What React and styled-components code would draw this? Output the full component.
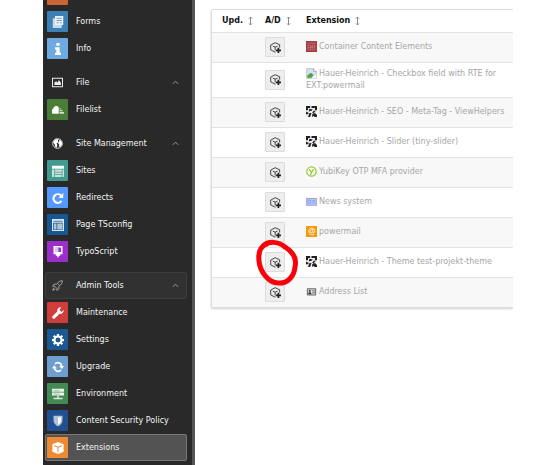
import React from 'react';
import styled, { createGlobalStyle, css } from 'styled-components';

const GlobalStyle = createGlobalStyle`
  * { box-sizing: border-box; }
  body {
    margin: 0;
    background: #fff;
    color: #222;
    font-family: Verdana, "DejaVu Sans", sans-serif;
    font-size: 8px;
    line-height: 12px;
  }
`;

const Layout = styled.div`
  display: grid;
  grid-template-columns: 152px minmax(0, 1fr);
  gap: 16px;
  height: 100vh;
  padding: 0 44px 0 43px;
  overflow: hidden;
`;

const Sidebar = styled.nav`
  background: #292929;
  border-right: 3px solid #555;
  padding: 0 5px 0 2px;
  overflow: hidden;
`;

const Groups = styled.div`
  display: flex;
  flex-direction: column;
  gap: 7px;
  margin-top: -19px;
`;

const entry = css`
  display: grid;
  grid-template-columns: 21px 1fr 12px;
  align-items: center;
  column-gap: 8px;
  width: 100%;
  height: 27px;
  padding: 0 5px 0 1px;
  border: 1px solid ${(p) => (p.$tone === 'active' ? '#777' : p.$tone === 'open' ? '#3d3d3d' : 'transparent')};
  border-radius: 2px;
  background: ${(p) => (p.$tone === 'active' ? '#535353' : p.$tone === 'open' ? '#313131' : 'transparent')};
  color: #f4f4f4;
  font: inherit;
  text-align: left;
  text-decoration: none;
  white-space: nowrap;
`;

const GroupButton = styled.button`${entry}`;
const ModuleLink = styled.a`${entry}`;

const ModuleList = styled.ul`
  list-style: none;
  margin: 0;
  padding: 0;
`;

const Tile = styled.span`
  display: grid;
  place-items: center;
  width: 21px;
  height: 21px;
  border-radius: 1px;
  background: ${(p) => p.$color || 'transparent'};
  color: #fff;
`;

const Glyph = styled.svg`
  display: block;
  justify-self: center;
  width: ${(p) => p.$size || 12}px;
  height: ${(p) => p.$size || 12}px;
  fill: currentColor;
`;

const Main = styled.main`
  padding-top: 9px;
`;

const TableFrame = styled.div`
  position: relative;
  border: 1px solid #ddd;
  border-width: 1px 0 2px 1px;
  border-radius: 2px 0 0 2px;
  box-shadow: -1px 1px 1px #eee;
`;

const Table = styled.table`
  width: 100%;
  border-collapse: collapse;
  table-layout: fixed;
`;

const Col = styled.col`
  width: ${(p) => p.$width}px;
`;

const HeadCell = styled.th`
  height: 22px;
  padding: 0 0 0 10px;
  text-align: left;
`;

const SortButton = styled.button`
  display: flex;
  align-items: center;
  gap: 5px;
  padding: 0;
  border: 0;
  background: none;
  color: #111;
  font: inherit;
  font-weight: bold;
  white-space: nowrap;
`;

const SortIcon = styled.svg`
  width: 5px;
  height: 10px;
  fill: none;
  stroke: #888;
`;

const Row = styled.tr`
  height: 30px;
  border-top: 1px solid #e2e2e2;
  &:nth-child(odd) { background: #f8f8f8; }
`;

const Cell = styled.td`
  padding: 4px 4px 4px 10px;
`;

const NameCell = styled(Cell)`
  padding-top: 5px;
  padding-bottom: 5px;
  color: #a6a6a6;
`;

const ActionWrap = styled.div`
  position: relative;
  width: 20px;
`;

const ActionButton = styled.button`
  display: grid;
  place-items: center;
  width: 20px;
  height: 20px;
  padding: 0;
  border: 1px solid #dcdcdc;
  border-radius: 1px;
  background: #eee;
  color: #222;
`;

const Marker = styled.svg`
  position: absolute;
  left: -10px;
  top: -14px;
  width: 46px;
  height: 50px;
  fill: none;
  stroke: #f9000b;
  stroke-width: 5;
  stroke-linecap: round;
  stroke-linejoin: round;
  pointer-events: none;
  z-index: 1;
`;

const Logo = styled.svg`
  display: inline-block;
  width: 11px;
  height: 11px;
  margin-right: 2px;
  vertical-align: -3px;
`;

const glyphs = {
  forms: <><path d="M4 0h11v12H4z" opacity=".9" /><path d="M1 3h3v9h9v4H1z" opacity=".7" /><path d="M6 3h7M6 6h7M6 9h3M10.500 9H13" stroke="#3d80b5" fill="none" /></>,
  info: <path d="M5.800 0h4.400v3.800H5.800zM4 5.500h6.200v7.500H12v3H4v-3h1.800V8.500H4z" />,
  image: <path fillRule="evenodd" d="M0 1h16v14H0zM1.500 2.500v11h13v-11zM3.500 11.500V8l2.500-2 2 2 2-3.500 3 4v3z" opacity=".9" />,
  cloud: <><path d="M2 13a3.200 3.200 0 0 1-.5-6.300C2 2 8 1 9 5v8z" /><path d="M10 5.500h2v1.500h-2zM10 8h4v1.500h-4zM10 10.500h6V13h-6z" opacity=".75" /></>,
  globe: <><circle cx="8" cy="8" r="7" fill="none" stroke="currentColor" strokeWidth="1.200" /><path d="M1.500 6l3-4 5-.5-1 3 1 1.500-3 2 1.500 2.500L6.500 14l-1.500-.5-1-4zM11 2.500l3 2.500.8 4-2.800 4-2-1 .5-2.500L9 8l1-2.500z" /></>,
  sites: <><path d="M0 1h16v4H0z" /><path d="M0 6h3v10H0zM4 6h9v3H4zM4 10h9v2H4zM4 13h9v3H4zM14 6h2v10h-2z" opacity=".7" /></>,
  redirect: <path d="M12.800 3.500L15 1v7H8.500l2.400-2.400A4.300 4.300 0 1 0 11.500 11l2.400 1.600A7.200 7.200 0 1 1 12.800 3.500z" />,
  page: <><path fillRule="evenodd" d="M0 0h16v16H0zM1.500 5v9.500h13V5z" opacity=".85" /><path d="M2.500 6h3.500v8H2.500zM7 6h7v8H7z" opacity=".65" /><path d="M2 3h12" stroke="#175794" /></>,
  typo: <><path fillRule="evenodd" d="M2 0h12v11h-3v2H9.500L8 16l-1.500-3H5v-2H2zM4 2v6h8V2z" /><path d="M4 2h4.500v6H4z" opacity=".7" /></>,
  rocket: <path d="M15 1c-4 0-6 2-8 5L3 6 1 9l3 0 3 3v3l3-2V9c3-2 5-4 5-8zM3 11l-2 4 4-2M9 6l2 2" fill="none" stroke="#bbb" strokeWidth="1.200" />,
  wrench: <path d="M15.500 4l-3 2.500L10 4l2-3.500a4.500 4.500 0 0 0-5 5.500l-6 6a2 2 0 0 0 3 3l6-6a4.500 4.500 0 0 0 5.500-5z" />,
  gear: <><circle cx="8" cy="8" r="4.700" fill="none" stroke="currentColor" strokeWidth="2.800" /><path d="M8 0v3M8 13v3M0 8h3M13 8h3M2.300 2.300l2 2M11.700 11.700l2 2M13.700 2.300l-2 2M4.300 11.700l-2 2" stroke="currentColor" strokeWidth="3" /></>,
  upgrade: <><path d="M3 9A5.200 5.200 0 0 0 12 12M13 7A5.200 5.200 0 0 0 4 4" fill="none" stroke="currentColor" strokeWidth="2.300" /><path d="M0 9.500l3-4 3.500 4zM9.500 6.500H16l-3 4z" /></>,
  server: <><path d="M0 1h16v4H0zM0 6h16v4H0z" opacity=".9" /><path d="M7 10h2v3H7zM2 13h12v2H2z" opacity=".8" /><path d="M2 3.500h8M2 8h8" stroke="#438b52" strokeWidth=".6" /></>,
  shield: <><path d="M2 1h12v6c0 4-3 7-6 8-3-1-6-4-6-8z" opacity=".65" /><path d="M8 3h4v4c0 3-2 5-4 6z" /></>,
  box: <><path d="M8 0l7.500 3v10L8 16 .5 13V3z" /><path d="M3 5l5 2 5-2M8 7v6" fill="none" stroke="#ee8a32" strokeWidth="1.400" /></>,
  chevron: <path d="M2 11l6-6 6 6" fill="none" stroke="#aaa" strokeWidth="2" />,
  activate: <><path d="M8 14.500H7l-6-3v-7L7.500 1 14 4v4M4 6l3.500 1.500L11 6M7.500 7.500v4.500" fill="none" stroke="currentColor" strokeWidth="1.200" /><path d="M11 8.500h2.500V11H16v2.500h-2.500V16H11v-2.500H8.500V11H11z" /></>,
};

const logos = {
  container: <><path fill="#a33b40" d="M0 0h16v16H0z" /><path d="M2 3h12M3 6h4v7H3zM9 6h4v7H9zM3 9h10" fill="none" stroke="#c98184" /></>,
  broken: <><path d="M1 1h10l4 4v10H1z" fill="#d3e2fa" stroke="#aaa" /><path d="M11 1v4h4" fill="#fff" stroke="#999" /><path d="M2 14v-3l5-4 4 3-3 4z" fill="#50a33d" /><path d="M8 15l7-6v6z" fill="#fff" /></>,
  hauer: <><path fill="#eee" d="M0 0h16v16H0z" /><path fill="#222" d="M0 0h6v3H3v3H0zM8 0h8v6h-3V3H8zM5 4l5 1-2 2-4 1zM11 7h3l-3 4-2-1zM0 8l4 2-1 2H0zM5 10h3l-2 6H3zM9 12l4-2 3 3v3h-4v-2l-3 2z" /></>,
  yubi: <><circle cx="8" cy="8" r="6.800" fill="#fff" stroke="#9bc93c" strokeWidth="1.800" /><path d="M4.800 4.500l3.200 5 3-5M8 9.500L6.500 13" fill="none" stroke="#9bc93c" strokeWidth="2" /></>,
  news: <><path fill="#bfc9f5" d="M0 3h16v11H0z" /><path d="M1 3.500h14v10H1zM3 6h4v4.500H3zM9 6.500h4M9 8.500h4M9 10.500h4" fill="none" stroke="#8293df" /></>,
  power: <><path fill="#f59a0c" d="M0 0h16v16H0z" /><path d="M12 12c-8 4-11-8-4-9 5 0 6 6 3 7-2 0-1-3-1-5-4-1-5 5-2 5l2-2" fill="none" stroke="#fff" strokeWidth="1.200" /></>,
  address: <><path fill="#ddd" d="M1 3h14v11H1z" /><path d="M2 4h12v9H2zM9 7h4M9 10h4" fill="none" stroke="#555" strokeWidth="1.200" /><circle cx="5.500" cy="7" r="1.500" fill="#333" /><path fill="#333" d="M3 12l1-3h3l1 3z" /></>,
};

const groups = [
  { modules: [['', 'forms', '#ca6534'], ['Forms', 'forms', '#3d80b5'], ['Info', 'info', '#6daae2']] },
  { title: 'File', icon: 'image', modules: [['Filelist', 'cloud', '#4b7d38']] },
  { title: 'Site Management', icon: 'globe', modules: [['Sites', 'sites', '#439a8e'], ['Redirects', 'redirect', '#5599ff'], ['Page TSconfig', 'page', '#175794'], ['TypoScript', 'typo', '#9c2fcb']] },
  { title: 'Admin Tools', icon: 'rocket', open: true, modules: [['Maintenance', 'wrench', '#cf3d3c'], ['Settings', 'gear', '#1c5893'], ['Upgrade', 'upgrade', '#6c9fd0'], ['Environment', 'server', '#438b52'], ['Content Security Policy', 'shield', '#214f91'], ['Extensions', 'box', '#ee8a32']] },
];

const extensions = [
  ['Container Content Elements', 'container'],
  ['Hauer-Heinrich - Checkbox field with RTE for EXT:powermail', 'broken'],
  ['Hauer-Heinrich - SEO - Meta-Tag - ViewHelpers', 'hauer'],
  ['Hauer-Heinrich - Slider (tiny-slider)', 'hauer'],
  ['YubiKey OTP MFA provider', 'yubi'],
  ['News system', 'news'],
  ['powermail', 'power'],
  ['Hauer-Heinrich - Theme test-projekt-theme', 'hauer'],
  ['Address List', 'address'],
];

const Icon = ({ name, size }) => (
  <Glyph viewBox="0 0 16 16" $size={size} aria-hidden="true">{glyphs[name]}</Glyph>
);

function ModuleGroup({ title, icon, open, modules }) {
  return (
    <div>
      {title && (
        <GroupButton type="button" aria-expanded="true" $tone={open ? 'open' : undefined}>
          <Tile><Icon name={icon} size={11} /></Tile>
          <span>{title}</span>
          <Icon name="chevron" size={7} />
        </GroupButton>
      )}
      <ModuleList>
        {modules.map(([label, glyph, color]) => (
          <li key={color}>
            <ModuleLink href="#" aria-label={label || 'Module'} $tone={label === 'Extensions' ? 'active' : undefined}>
              <Tile $color={color}>{label && <Icon name={glyph} />}</Tile>
              <span>{label}</span>
            </ModuleLink>
          </li>
        ))}
      </ModuleList>
    </div>
  );
}

export default function App() {
  return (
    <>
      <GlobalStyle />
      <Layout>
        <Sidebar aria-label="Modules">
          <Groups>
            {groups.map((group) => <ModuleGroup key={group.title || 'web'} {...group} />)}
          </Groups>
        </Sidebar>
        <Main>
          <TableFrame>
            <Table>
              <colgroup><Col $width={43} /><Col $width={41} /><col /></colgroup>
              <thead>
                <tr>
                  {['Upd.', 'A/D', 'Extension'].map((label) => (
                    <HeadCell key={label} scope="col">
                      <SortButton type="button">
                        {label}
                        <SortIcon viewBox="0 0 5 10" aria-hidden="true"><path d="M2.500 1v8M1 2.500L2.500 1 4 2.500M1 7.500L2.500 9 4 7.500" /></SortIcon>
                      </SortButton>
                    </HeadCell>
                  ))}
                </tr>
              </thead>
              <tbody>
                {extensions.map(([name, logo]) => (
                  <Row key={name}>
                    <Cell />
                    <Cell>
                      <ActionWrap>
                        <ActionButton type="button" aria-label={`Activate ${name}`}><Icon name="activate" size={11} /></ActionButton>
                        {name.includes('Theme') && (
                          <Marker viewBox="0 0 46 50" aria-hidden="true"><path d="M8 8C13 3 23 3 30 9C38 14 42 21 40 29C39 39 32 46 23 45C14 45 5 34 4 23C3 14 6 8 12 6" /></Marker>
                        )}
                      </ActionWrap>
                    </Cell>
                    <NameCell><Logo viewBox="0 0 16 16" aria-hidden="true">{logos[logo]}</Logo>{name}</NameCell>
                  </Row>
                ))}
              </tbody>
            </Table>
          </TableFrame>
        </Main>
      </Layout>
    </>
  );
}
